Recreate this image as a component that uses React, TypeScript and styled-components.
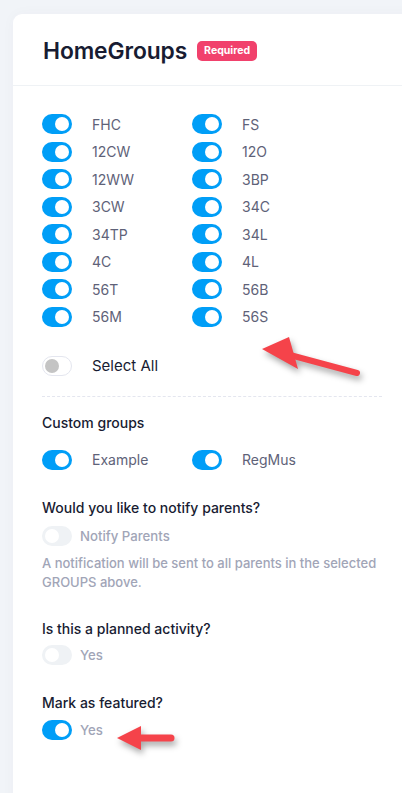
import React from "react";
import styled, { createGlobalStyle } from "styled-components";

const GlobalStyle = createGlobalStyle`
  html, body {
    margin: 0;
    padding: 0;
    background: #f1f4f8;
    font-family: Inter, "Noto Sans", sans-serif;
  }
`;

const Page = styled.div`
  position: relative;
  width: 402px;
  height: 793px;
  overflow: hidden;
  padding: 14px 0 0 13px;
  box-sizing: border-box;
`;

const Card = styled.div`
  background: #ffffff;
  border-radius: 9px 0 0 0;
  width: 420px;
  min-height: 800px;
  box-shadow: 0 0 14px rgba(82, 63, 105, 0.03);
`;

const CardHeader = styled.div`
  display: flex;
  align-items: center;
  gap: 10px;
  height: 69px;
  padding: 2px 30px 0;
  border-bottom: 1px solid #eff2f5;
`;

const Title = styled.h1`
  margin: 0;
  font-size: 22.8px;
  font-weight: 600;
  color: #181c32;
  letter-spacing: -0.1px;
`;

const Badge = styled.span`
  display: inline-flex;
  align-items: center;
  height: 20px;
  padding: 0 7px;
  border-radius: 5px;
  background: #f1416c;
  color: #ffffff;
  font-size: 10.5px;
  font-weight: 700;
`;

const CardBody = styled.div`
  width: 340px;
  padding: 28px 0 0 29px;
`;

const ToggleGrid = styled.div`
  display: grid;
  grid-template-columns: 150px 150px;
  row-gap: 7.5px;
`;

const ToggleRow = styled.label<{ $gap?: number }>`
  display: flex;
  align-items: center;
  gap: ${(p) => p.$gap ?? 20}px;
  height: 20px;
`;

const Track = styled.span<{ $on: boolean; $muted?: boolean }>`
  position: relative;
  flex: none;
  width: 30px;
  height: 20px;
  border-radius: 10px;
  box-sizing: border-box;
  background: ${(p) => (p.$on ? "#009ef7" : p.$muted ? "#eff2f5" : "#ffffff")};
  border: ${(p) => (p.$on || p.$muted ? "none" : "1px solid #e4e6ef")};

  &::after {
    content: "";
    position: absolute;
    top: 50%;
    width: 14px;
    height: 14px;
    border-radius: 50%;
    transform: translateY(-50%);
    left: ${(p) => (p.$on ? "13px" : p.$muted ? "3px" : "2px")};
    background: ${(p) => (p.$on || p.$muted ? "#ffffff" : "#c4c4c4")};
  }
`;

const GroupLabel = styled.span`
  font-size: 14px;
  color: #5e6278;
`;

const MutedLabel = styled.span`
  font-size: 13.2px;
  color: #a1a5b7;
  font-weight: 500;
`;

const SelectAllRow = styled(ToggleRow)`
  margin-top: 29px;
`;

const SelectAllText = styled.span`
  font-size: 15px;
  color: #181c32;
`;

const Divider = styled.div`
  margin: 20px 0 0;
  border-top: 1px dashed #e4e6ef;
`;

const Question = styled.div<{ $top: number }>`
  margin-top: ${(p) => p.$top}px;
  font-size: 14px;
  font-weight: 500;
  color: #181c32;
  line-height: 20px;
`;

const CustomRow = styled.div`
  display: flex;
  margin-top: 17px;
`;

const CustomCell = styled.div`
  width: 150px;
`;

const OptionRow = styled(ToggleRow)<{ $top?: number }>`
  margin-top: ${(p) => p.$top ?? 8}px;
`;

const Help = styled.div`
  margin-top: 8px;
  font-size: 13px;
  line-height: 19px;
  color: #a1a5b7;
  font-weight: 500;
`;

const ArrowWrap = styled.svg<{ $x: number; $y: number }>`
  position: absolute;
  left: ${(p) => p.$x}px;
  top: ${(p) => p.$y}px;
  overflow: visible;
  filter: drop-shadow(2px 4px 3px rgba(0, 0, 0, 0.35));
`;

const left = ["FHC", "12CW", "12WW", "3CW", "34TP", "4C", "56T", "56M"];
const right = ["FS", "12O", "3BP", "34C", "34L", "4L", "56B", "56S"];

const Toggle = ({ label, on = true }: { label: string; on?: boolean }) => (
  <ToggleRow>
    <Track $on={on} />
    <GroupLabel>{label}</GroupLabel>
  </ToggleRow>
);

const App = () => {
  const cells: string[] = [];
  left.forEach((l, i) => {
    cells.push(l, right[i]);
  });

  return (
    <>
      <GlobalStyle />
      <Page>
        <Card>
          <CardHeader>
            <Title>HomeGroups</Title>
            <Badge>Required</Badge>
          </CardHeader>
          <CardBody>
            <ToggleGrid>
              {cells.map((c) => (
                <Toggle key={c} label={c} />
              ))}
            </ToggleGrid>

            <SelectAllRow>
              <Track $on={false} />
              <SelectAllText>Select All</SelectAllText>
            </SelectAllRow>

            <Divider />

            <Question $top={16}>Custom groups</Question>
            <CustomRow>
              <CustomCell>
                <Toggle label="Example" />
              </CustomCell>
              <CustomCell>
                <Toggle label="RegMus" />
              </CustomCell>
            </CustomRow>

            <Question $top={28}>Would you like to notify parents?</Question>
            <OptionRow $gap={8}>
              <Track $on={false} $muted />
              <MutedLabel>Notify Parents</MutedLabel>
            </OptionRow>
            <Help>
              A notification will be sent to all parents in the selected
              <br />
              GROUPS above.
            </Help>

            <Question $top={27}>Is this a planned activity?</Question>
            <OptionRow $gap={8} $top={6}>
              <Track $on={false} $muted />
              <MutedLabel>Yes</MutedLabel>
            </OptionRow>

            <Question $top={28}>Mark as featured?</Question>
            <OptionRow $gap={8} $top={7}>
              <Track $on />
              <MutedLabel>Yes</MutedLabel>
            </OptionRow>
          </CardBody>
        </Card>

        <ArrowWrap $x={258} $y={334} width="110" height="50" viewBox="0 0 110 50">
          <line x1="32" y1="21" x2="99" y2="39" stroke="#f5434a" strokeWidth="6" strokeLinecap="round" />
          <polygon points="4,15 31,3 40,35" fill="#f5434a" />
        </ArrowWrap>

        <ArrowWrap $x={112} $y={723} width="70" height="30" viewBox="0 0 70 30">
          <line x1="26" y1="15" x2="59" y2="15" stroke="#f5434a" strokeWidth="7" strokeLinecap="round" />
          <polygon points="5,15 29,3 29,27" fill="#f5434a" />
        </ArrowWrap>
      </Page>
    </>
  );
};

export default App;
